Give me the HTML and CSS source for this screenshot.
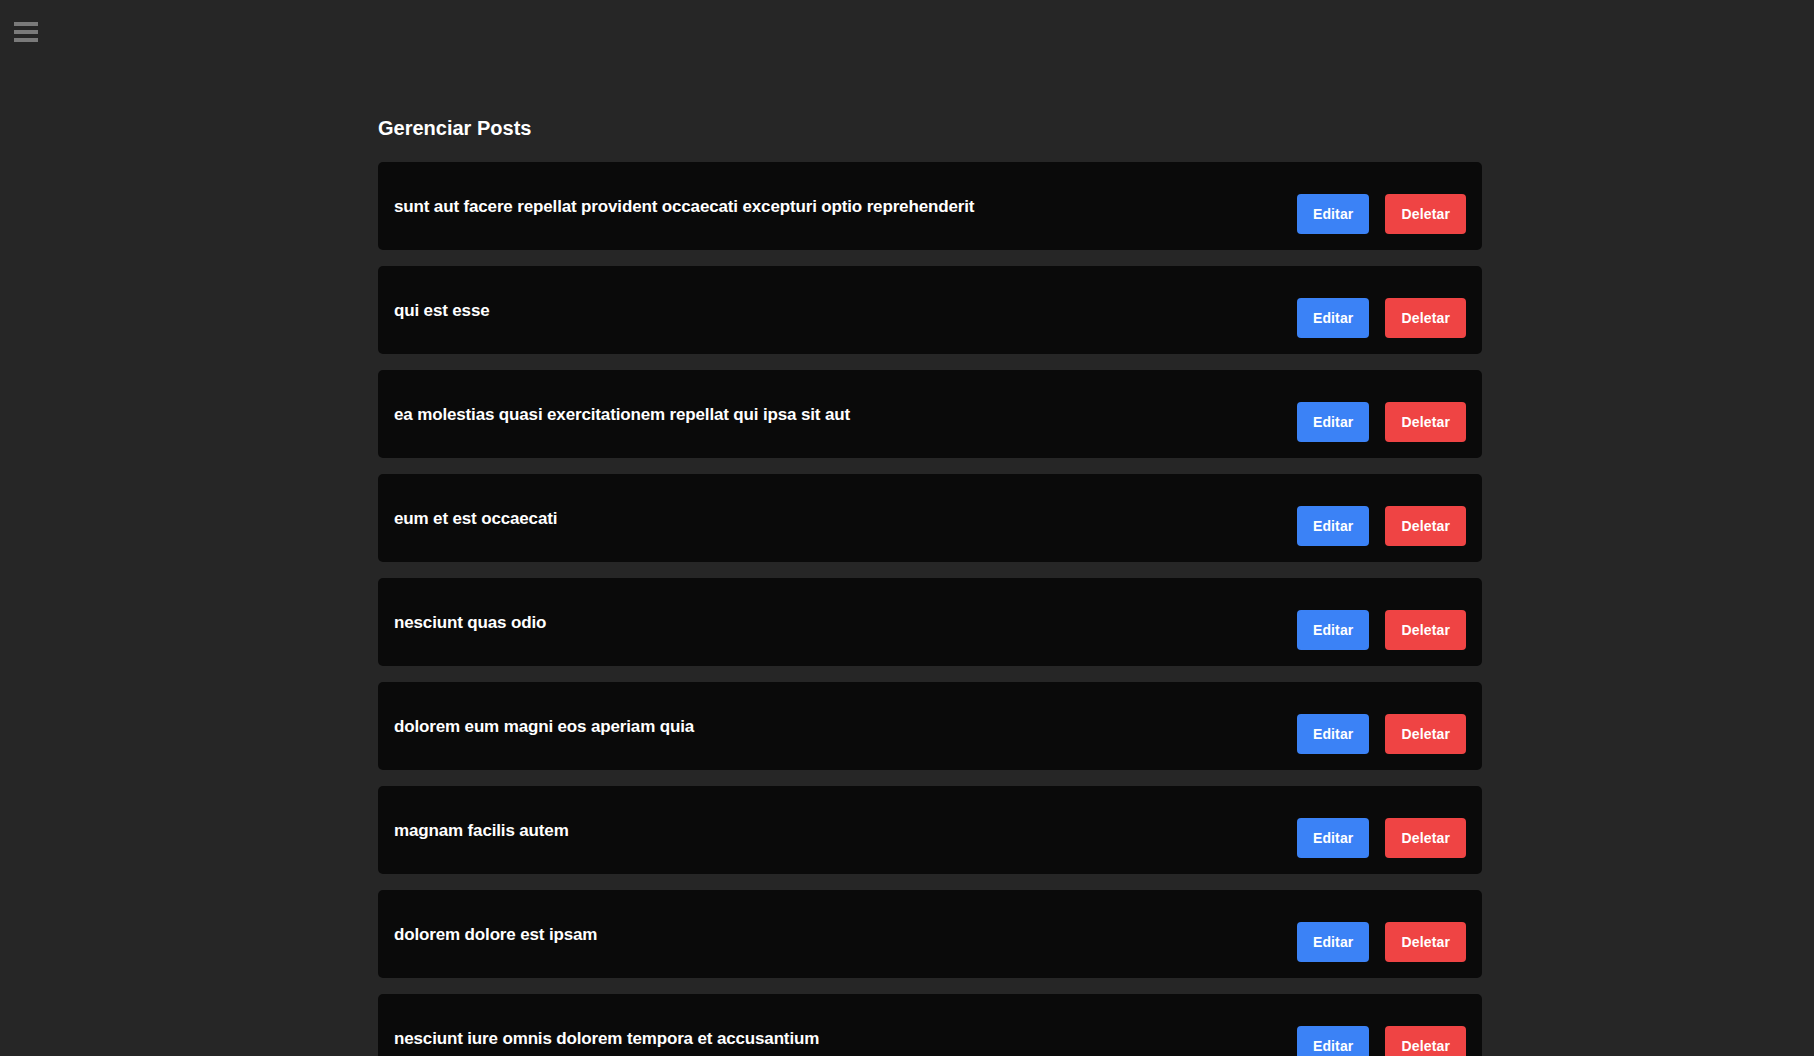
FILE: index.html
```html
<!DOCTYPE html>
<html lang="pt-BR">
<head>
<meta charset="utf-8">
<title>Gerenciar Posts</title>
<link rel="stylesheet" href="styles.css">
</head>
<body>
<div class="layout">
  <aside class="side">
    <button class="menu-btn" aria-label="Menu">
      <span class="bar"></span><span class="bar"></span><span class="bar"></span>
    </button>
  </aside>
  <main class="main">
    <div class="container">
      <h1 class="page-title">Gerenciar Posts</h1>
      <ul class="post-list">
        <li class="post-card"><h3 class="post-title">sunt aut facere repellat provident occaecati excepturi optio reprehenderit</h3><div class="actions"><button class="btn btn-edit">Editar</button><button class="btn btn-delete">Deletar</button></div></li>
        <li class="post-card"><h3 class="post-title">qui est esse</h3><div class="actions"><button class="btn btn-edit">Editar</button><button class="btn btn-delete">Deletar</button></div></li>
        <li class="post-card"><h3 class="post-title">ea molestias quasi exercitationem repellat qui ipsa sit aut</h3><div class="actions"><button class="btn btn-edit">Editar</button><button class="btn btn-delete">Deletar</button></div></li>
        <li class="post-card"><h3 class="post-title">eum et est occaecati</h3><div class="actions"><button class="btn btn-edit">Editar</button><button class="btn btn-delete">Deletar</button></div></li>
        <li class="post-card"><h3 class="post-title">nesciunt quas odio</h3><div class="actions"><button class="btn btn-edit">Editar</button><button class="btn btn-delete">Deletar</button></div></li>
        <li class="post-card"><h3 class="post-title">dolorem eum magni eos aperiam quia</h3><div class="actions"><button class="btn btn-edit">Editar</button><button class="btn btn-delete">Deletar</button></div></li>
        <li class="post-card"><h3 class="post-title">magnam facilis autem</h3><div class="actions"><button class="btn btn-edit">Editar</button><button class="btn btn-delete">Deletar</button></div></li>
        <li class="post-card"><h3 class="post-title">dolorem dolore est ipsam</h3><div class="actions"><button class="btn btn-edit">Editar</button><button class="btn btn-delete">Deletar</button></div></li>
        <li class="post-card"><h3 class="post-title">nesciunt iure omnis dolorem tempora et accusantium</h3><div class="actions"><button class="btn btn-edit">Editar</button><button class="btn btn-delete">Deletar</button></div></li>
        <li class="post-card"><h3 class="post-title">optio molestias id quia eum</h3><div class="actions"><button class="btn btn-edit">Editar</button><button class="btn btn-delete">Deletar</button></div></li>
      </ul>
    </div>
  </main>
</div>
</body>
</html>
```
FILE: styles.css
```css
html, body {
  margin: 0;
  padding: 0;
  background: #262626;
  color: #ffffff;
  font-family: "Liberation Sans", Arial, sans-serif;
}

.layout {
  display: flex;
  min-height: 100vh;
}

.side {
  width: 46px;
  flex: 0 0 46px;
}

.menu-btn {
  display: flex;
  flex-direction: column;
  gap: 4px;
  background: none;
  border: 0;
  padding: 0;
  margin: 22px 0 0 14px;
  cursor: pointer;
}

.bar {
  display: block;
  width: 24px;
  height: 4px;
  background: #7a7a7a;
}

.main {
  flex: 1;
  padding-top: 114px;
}

.container {
  max-width: 1104px;
  margin: 0 auto;
}

.page-title {
  margin: 0 0 20px 0;
  font-size: 20px;
  line-height: 28px;
  font-weight: 700;
}

.post-list {
  list-style: none;
  margin: 0;
  padding: 0;
  display: flex;
  flex-direction: column;
  gap: 16px;
}

.post-card {
  display: flex;
  align-items: center;
  justify-content: space-between;
  background: #0a0a0a;
  border-radius: 5px;
  padding: 16px;
}

.post-title {
  margin: 0;
  padding-top: 2px;
  font-family: "Liberation Sans", Arial, sans-serif;
  font-size: 17px;
  line-height: 28px;
  font-weight: 700;
  letter-spacing: -0.15px;
}

.actions {
  display: flex;
  gap: 16px;
  margin-top: 16px;
}

.btn {
  font-family: "Liberation Sans", Arial, sans-serif;
  font-size: 14px;
  font-weight: 700;
  line-height: 24px;
  letter-spacing: 0.15px;
  padding: 8px 16px;
  border: 0;
  border-radius: 4px;
  color: #ffffff;
  cursor: pointer;
}

.btn-edit {
  background: #3b82f6;
}

.btn-delete {
  background: #ef4444;
}
```
